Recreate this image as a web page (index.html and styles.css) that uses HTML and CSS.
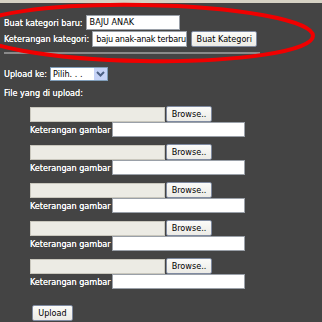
FILE: index.html
```html
<!DOCTYPE html>
<html>
<head>
<meta charset="utf-8">
<link rel="stylesheet" href="styles.css">
</head>
<body>
<div class="topstrip"></div>
<div class="page">
  <div class="row r1">
    <span class="lbl">Buat kategori baru:</span>
    <span class="inp w-kat">BAJU ANAK</span>
  </div>
  <div class="row r2">
    <span class="lbl">Keterangan kategori:</span>
    <span class="inp w-ket">baju anak-anak terbaru</span>
    <span class="btn b-kat">Buat Kategori</span>
  </div>
  <div class="rule"></div>
  <div class="row r3">
    <span class="lbl">Upload ke:</span>
    <span class="select"><span class="sel-text">Pilih. . .</span><span class="sel-arrow"><svg width="9" height="6" viewBox="0 0 9 6"><path d="M1 1 L4.5 4.5 L8 1" fill="none" stroke="#4d6185" stroke-width="2"/></svg></span></span>
  </div>
  <div class="row r4"><span class="lbl">File yang di upload:</span></div>
  <div class="files">
    <div class="grp">
      <div class="row"><span class="ffield"></span><span class="btn b-br">Browse..</span></div>
      <div class="row"><span class="lbl g">Keterangan gambar</span><span class="inp w-gam"></span></div>
    </div>
    <div class="grp">
      <div class="row"><span class="ffield"></span><span class="btn b-br">Browse..</span></div>
      <div class="row"><span class="lbl g">Keterangan gambar</span><span class="inp w-gam"></span></div>
    </div>
    <div class="grp">
      <div class="row"><span class="ffield"></span><span class="btn b-br">Browse..</span></div>
      <div class="row"><span class="lbl g">Keterangan gambar</span><span class="inp w-gam"></span></div>
    </div>
    <div class="grp">
      <div class="row"><span class="ffield"></span><span class="btn b-br">Browse..</span></div>
      <div class="row"><span class="lbl g">Keterangan gambar</span><span class="inp w-gam"></span></div>
    </div>
    <div class="grp">
      <div class="row"><span class="ffield"></span><span class="btn b-br">Browse..</span></div>
      <div class="row"><span class="lbl g">Keterangan gambar</span><span class="inp w-gam"></span></div>
    </div>
    <div class="row up"><span class="btn b-up">Upload</span></div>
  </div>
</div>
<svg class="ring" width="322" height="80" viewBox="0 0 322 80">
  <ellipse cx="143" cy="33" rx="170" ry="28" transform="rotate(1 143 33)" fill="none" stroke="#f00000" stroke-width="4"/>
</svg>
</body>
</html>
```
FILE: styles.css
```css
html, body {
  margin: 0;
  padding: 0;
  background: #444444;
  width: 322px;
  height: 322px;
  overflow: hidden;
  font-family: "DejaVu Sans Condensed", "DejaVu Sans", sans-serif;
  font-size: 9px;
  color: #ffffff;
  position: relative;
}
.topstrip {
  height: 3px;
  background: #d6d2c4;
}
.page {
  padding: 0 0 0 4px;
}
.row {
  display: flex;
  align-items: center;
  height: 16px;
  white-space: nowrap;
}
.r1 { margin-top: 12px; height: 15px; }
.r2 { margin-top: 1px; }
.lbl {
  font-weight: normal;
  text-shadow: 0 0 0.4px #ffffff;
}
.inp {
  box-sizing: border-box;
  height: 15px;
  background: #ffffff;
  border: 1px solid #9aa0a8;
  color: #000;
  font-family: "DejaVu Sans Condensed", "DejaVu Sans", sans-serif;
  font-size: 9px;
  line-height: 13px;
  padding: 0 3px;
  overflow: hidden;
}
.w-kat { width: 94px; margin-left: 3px; }
.w-ket { width: 95px; margin-left: 3px; height: 16px; line-height: 14px; letter-spacing: -0.25px; }
.btn {
  box-sizing: border-box;
  height: 16px;
  background: linear-gradient(#fbfbf9, #ecebe6);
  border: 1px solid #7f8aa0;
  border-radius: 2px;
  color: #000;
  font-family: "DejaVu Sans Condensed", "DejaVu Sans", sans-serif;
  font-size: 9px;
  line-height: 14px;
  text-align: center;
}
.b-kat { width: 66px; margin-left: 4px; }
.rule {
  margin: 5px 0 0 0;
  width: 256px;
  height: 2px;
  background: #8a8a8a;
}
.r3 { margin-top: 12px; height: 15px; }
.select {
  display: flex;
  box-sizing: border-box;
  width: 58px;
  height: 14px;
  margin-left: 3px;
  background: #fff;
  border: 1px solid #7f9db9;
  color: #000;
  font-size: 9px;
}
.sel-text { flex: 1; padding-left: 2px; line-height: 12px; }
.sel-arrow {
  width: 13px;
  display: flex;
  align-items: center;
  justify-content: center;
  background: #c6d3f7;
}
.r4 { margin-top: 4px; }
.files {
  padding-left: 26px;
  margin-top: 5px;
}
.grp { margin-bottom: 7px; }
.grp .row { height: 15px; }
.grp .row:first-child { height: 16px; }
.ffield {
  box-sizing: border-box;
  width: 135px;
  height: 15px;
  background: #ecebe4;
  border: 1px solid #c9c7bd;
}
.b-br { width: 46px; margin-left: 1px; }
.g { width: 82px; }
.w-gam { width: 133px; height: 15px; }
.up { margin-top: 15px; padding-left: 2px; height: 17px; }
.b-up { width: 41px; height: 16px; }
.ring {
  position: absolute;
  left: 0;
  top: 0;
}
```
